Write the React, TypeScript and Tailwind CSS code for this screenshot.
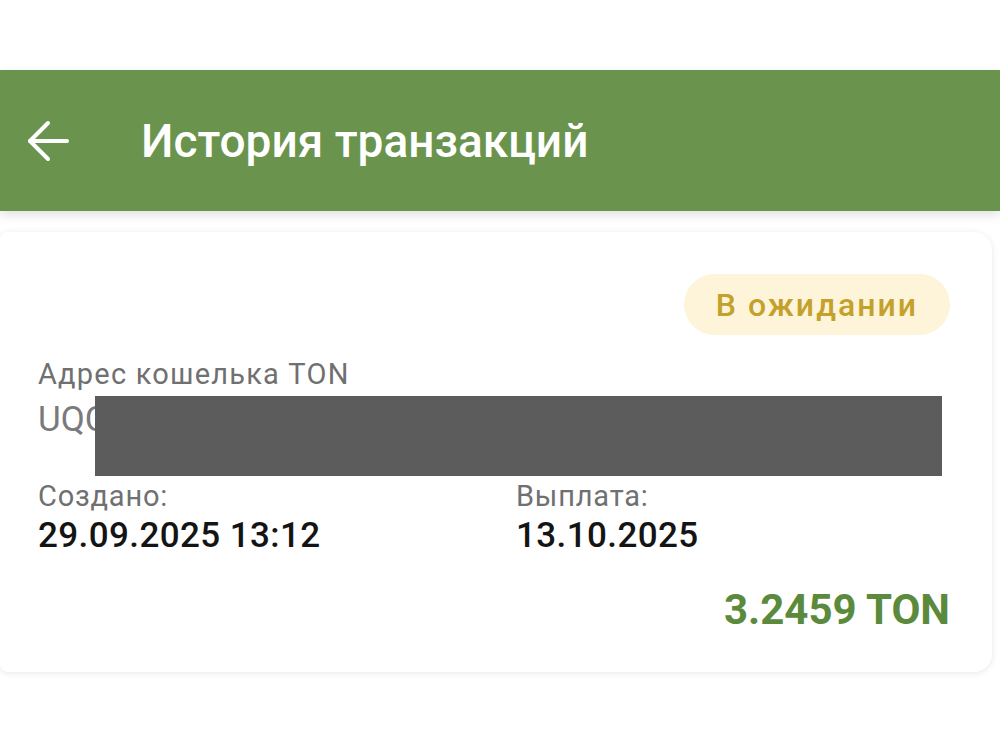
const font = { fontFamily: 'Roboto, "Noto Sans", sans-serif' };

const BackArrow = () => (
  <svg width="44" height="44" viewBox="0 0 44 44" fill="none" stroke="currentColor" strokeWidth="4" strokeLinecap="round" strokeLinejoin="round">
    <path d="M41 22H4" />
    <path d="M22 4L4 22l18 18" />
  </svg>
);

const InfoField = ({ label, value }: { label: string; value: string }) => (
  <div className="flex flex-col">
    <span className="text-[29px] leading-[34px] tracking-[0.8px] text-[#707070]">{label}</span>
    <span className="mt-[3px] text-[35px] leading-[40px] tracking-[0.4px] font-medium text-[#141414]">
      {value}
    </span>
  </div>
);

export default function App() {
  return (
    <div className="min-h-[750px] w-[1000px] bg-white" style={font}>
      <div className="h-[70px]" />
      <header className="relative z-10 flex h-[141px] items-center bg-[#6a934d] shadow-[0_4px_10px_rgba(0,0,0,0.12)]">
        <button className="ml-[26px] flex h-[44px] w-[44px] items-center justify-center text-white">
          <BackArrow />
        </button>
        <h1 className="ml-[71px] text-[46px] leading-none font-medium text-white">
          История транзакций
        </h1>
      </header>

      <div className="pt-[21px] pr-[8px]">
        <div className="rounded-r-[18px] rounded-l-[8px] bg-white px-[38px] pt-[42px] pb-[38px] shadow-[0_1px_6px_rgba(0,0,0,0.10)]">
          <div className="flex justify-end pr-[4px]">
            <span className="flex h-[61px] items-center rounded-full bg-[#fdf4da] px-[32px] text-[32px] tracking-[2px] font-medium text-[#c4a12a]">
              В ожидании
            </span>
          </div>

          <div className="mt-[22px] flex flex-col">
            <span className="text-[29px] leading-[34px] tracking-[1.2px] text-[#707070]">Адрес кошелька TON</span>
            <div className="relative mt-[4px] h-[84px]">
              <span className="text-[35px] leading-[50px] text-[#7a7a7a]">UQC</span>
              <div className="absolute top-[1px] left-[57px] h-[80px] w-[847px] bg-[#5c5c5c]" />
            </div>
          </div>

          <div className="grid grid-cols-[478px_1fr]">
            <InfoField label="Создано:" value="29.09.2025 13:12" />
            <InfoField label="Выплата:" value="13.10.2025" />
          </div>

          <div className="mt-[30px] flex justify-end pr-[4px]">
            <span className="text-[42px] leading-[48px] font-bold text-[#5b8a3d]">3.2459 TON</span>
          </div>
        </div>
      </div>
    </div>
  );
}
